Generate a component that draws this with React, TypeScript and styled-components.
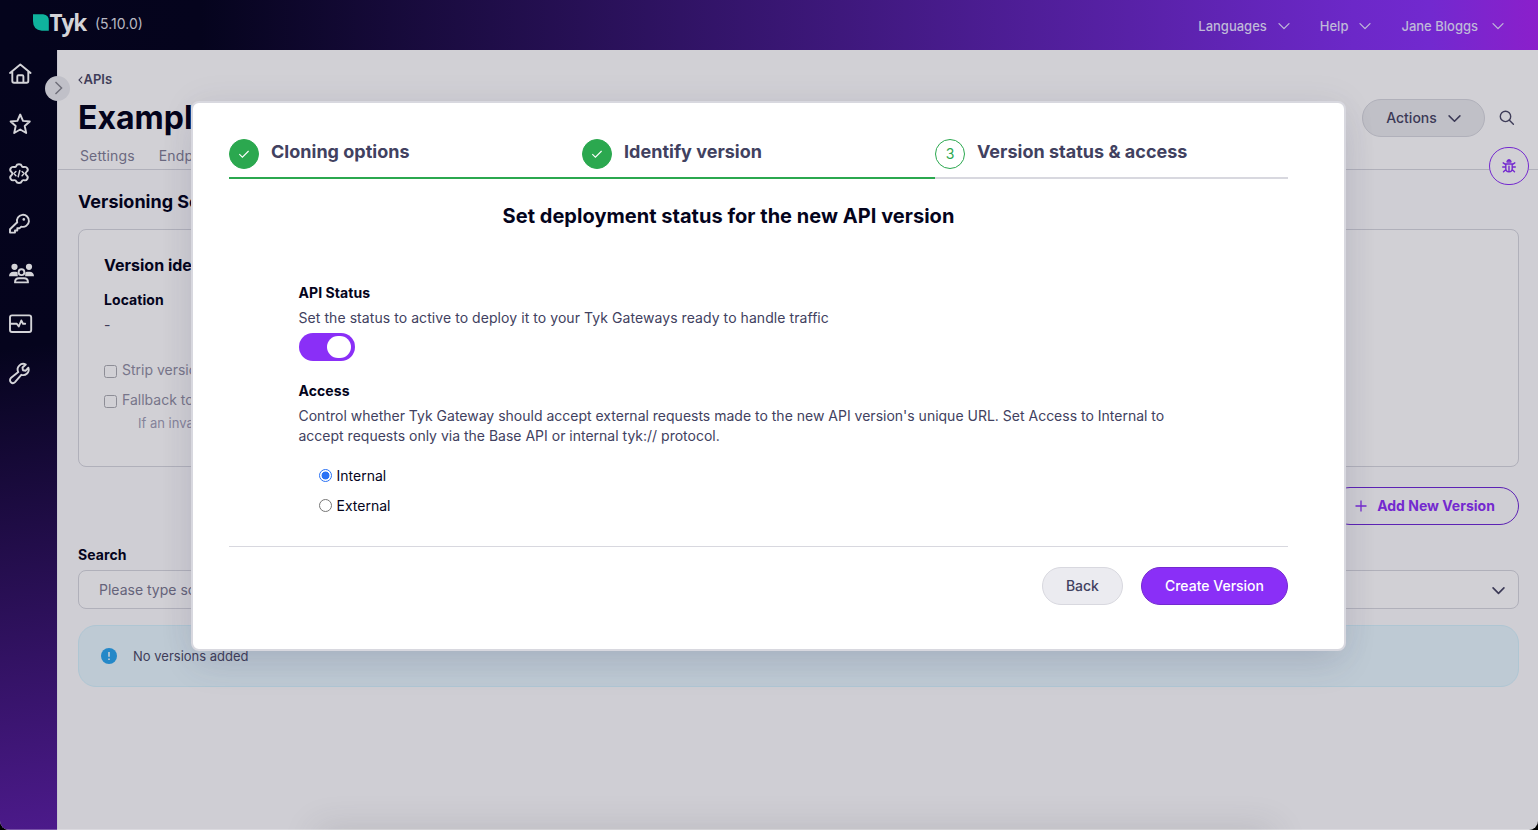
import React from 'react';
import styled, { createGlobalStyle } from 'styled-components';

const Global = createGlobalStyle`
  * { box-sizing: border-box; }
  html, body { margin: 0; padding: 0; }
  body { background: #000; overflow: hidden; }
  button { font-family: inherit; }
  h1, h2, h3, p { margin: 0; }
`;

const Window = styled.div`
  position: relative;
  width: 1538px;
  height: 830px;
  overflow: hidden;
  display: flex;
  flex-direction: column;
  border-radius: 0 0 9px 9px;
  background: #cfced4;
  font-family: Inter, 'Liberation Sans', sans-serif;
  font-size: 14px;
  color: #3f3d59;
`;

const Header = styled.header`
  height: 50px;
  flex: none;
  display: flex;
  align-items: center;
  padding: 0 34px 0 32px;
  color: #bfb9d8;
  background: linear-gradient(90deg, #04041c 0%, #05041d 13%, #6c28c8 88%, #7229cf 93%, #8b1fcb 100%);
`;

const Brand = styled.div`
  width: 54px;
  flex: none;
  display: flex;
  align-items: center;
  height: 50px;
`;

const WordMark = styled.span`
  font-family: 'Open Sans', Inter, sans-serif;
  font-size: 22.5px;
  font-weight: 700;
  line-height: 32px;
  letter-spacing: -1.1px;
  margin-top: -5px;
  color: #d4d4d8;
`;

const Version = styled.span`
  margin-left: 9px;
  flex: 1;
  font-size: 14px;
  line-height: 20px;
  margin-top: -2px;
  color: #b8b8c2;
`;

const HeaderItem = styled.div<{ $gap?: number }>`
  display: flex;
  align-items: center;
  gap: ${(p) => p.$gap ?? 11}px;
  margin-left: 30px;
  padding-top: 1px;
  font-size: 13px;
  font-weight: 500;
  line-height: 20px;
`;

const Body = styled.div`
  flex: 1;
  display: flex;
  min-height: 0;
`;

const Sidebar = styled.nav`
  width: 57px;
  flex: none;
  display: flex;
  flex-direction: column;
  gap: 22px;
  padding: 10px 0 0 6px;
  background: linear-gradient(172deg, #04041c 0%, #05041d 38%, #4c1a8b 100%);
  color: #d4d4d8;
`;

const NavIcon = styled.svg`
  width: 28px;
  height: 28px;
  fill: none;
  stroke: currentColor;
  stroke-width: 1.9;
  stroke-linecap: round;
  stroke-linejoin: round;
`;

const Expander = styled.div`
  position: absolute;
  left: 45px;
  top: 75.5px;
  width: 25px;
  height: 25px;
  padding-left: 2px;
  border-radius: 50%;
  background: #c0c0c8;
  display: flex;
  align-items: center;
  justify-content: center;
  color: #6d6d78;
`;

const Page = styled.main`
  flex: 1;
  min-width: 0;
  border-left: 1px solid #c7c6cf;
  white-space: nowrap;
`;

const Top = styled.div`
  height: 120px;
  background: #d1d0d5;
  border-bottom: 1px solid #b0b0ba;
  padding: 19px 23px 0 20px;
  display: flex;
  justify-content: space-between;
`;

const Crumb = styled.div`
  display: flex;
  align-items: center;
  gap: 0.5px;
  font-size: 13px;
  font-weight: 600;
  line-height: 20px;

  svg {
    flex: none;
    margin-top: 2px;
  }
`;

const PageTitle = styled.h1`
  margin-top: 8px;
  font-size: 32px;
  line-height: 42px;
  font-weight: 700;
  color: #04041c;
`;

const Tabs = styled.div`
  display: flex;
  gap: 24px;
  margin: 7px 0 0 2px;
  line-height: 20px;
  letter-spacing: 0.14px;
  color: #6b6980;
`;

const TopActions = styled.div`
  display: flex;
  gap: 14px;
  padding-top: 30px;
  height: 68px;
  align-items: center;
`;

const Button = styled.button<{ $kind: 'neutral' | 'dim' | 'primary' | 'outline' }>`
  display: flex;
  align-items: center;
  justify-content: center;
  flex: none;
  height: 38px;
  border-radius: 19px;
  padding: 0 23px 1px;
  font-size: 14px;
  font-weight: ${(p) => (p.$kind === 'outline' ? 700 : 500)};
  border: 1px solid
    ${(p) => ({ neutral: '#d8d8df', dim: '#b0b0ba', primary: '#7429cf', outline: '#5c22b4' })[p.$kind]};
  background: ${(p) =>
    ({ neutral: '#ebebf0', dim: '#c0c0c7', primary: '#8a2ff7', outline: 'transparent' })[p.$kind]};
  color: ${(p) =>
    ({ neutral: '#414160', dim: '#3b3956', primary: '#ffffff', outline: '#7429cf' })[p.$kind]};

  svg {
    flex: none;
  }
`;

const ActionsButton = styled(Button)`
  width: 123px;
  gap: 11px;

  svg {
    margin-top: 1px;
  }
`;

const AddButton = styled(Button)`
  width: 188px;
  gap: 10px;
  margin: 20px 0 0 auto;
`;

const DebugButton = styled.div`
  position: absolute;
  left: 1489px;
  top: 147px;
  width: 40px;
  height: 38px;
  border-radius: 20px;
  border: 1px solid #7429cf;
  background: #d1d0d5;
  display: flex;
  align-items: center;
  justify-content: center;
  color: #7429cf;
`;

const Content = styled.div`
  padding: 20px 19px 0 20px;
`;

const SectionTitle = styled.h2`
  font-size: 18px;
  line-height: 24px;
  font-weight: 700;
  color: #04041c;
`;

const Card = styled.section`
  margin-top: 15px;
  height: 238px;
  border: 1px solid #b0b0ba;
  border-radius: 8px;
  background: #d1d0d5;
  padding: 23px 25px;
`;

const CardTitle = styled.h3`
  font-size: 16px;
  line-height: 24px;
  font-weight: 700;
  color: #04041c;
`;

const Strong = styled.div`
  font-weight: 700;
  line-height: 20px;
  letter-spacing: 0.07px;
  color: #04041c;
`;

const Location = styled.div`
  margin-top: 13px;
  line-height: 29px;
`;

const Check = styled.div`
  display: flex;
  align-items: center;
  gap: 5px;
  height: 20px;
  margin-top: 10px;
  color: #77758a;
`;

const CheckBox = styled.span`
  width: 13px;
  height: 13px;
  margin-top: 4px;
  border: 1px solid #8d8d96;
  border-radius: 2.5px;
`;

const Checks = styled.div`
  margin-top: 20px;
`;

const Hint = styled.div`
  margin: 4px 0 0 34px;
  font-size: 13px;
  line-height: 20px;
  color: #85839a;
`;

const SearchLabel = styled(Strong)`
  margin-top: 20px;
`;

const SearchField = styled.div`
  margin-top: 5px;
  height: 39px;
  border: 1px solid #b0b0ba;
  border-radius: 8px;
  background: #d1d0d5;
  display: flex;
  align-items: center;
  justify-content: space-between;
  padding: 0 13px 0 20px;
  color: #65637a;

  svg {
    margin-top: 1px;
    color: #3b3956;
  }
`;

const Notice = styled.div`
  margin-top: 16px;
  height: 62px;
  border: 1px solid #afc6d3;
  border-radius: 18px;
  background: #becad4;
  display: flex;
  align-items: center;
  gap: 16px;
  padding-left: 22px;
  font-size: 13px;
  color: #3f3d59;
`;

const Modal = styled.div`
  position: absolute;
  left: 191px;
  top: 101px;
  width: 1155px;
  height: 550px;
  border: 2px solid #d8d8df;
  border-radius: 8px;
  background: #fff;
  box-shadow: 0 16px 36px -6px rgba(60, 60, 100, 0.15), 0 0 36px rgba(60, 60, 100, 0.06);
  padding: 36px 56px 0 36px;
`;

const Steps = styled.div`
  display: grid;
  grid-template-columns: repeat(3, 353px);
`;

const Step = styled.div<{ $done: boolean }>`
  display: flex;
  gap: 12px;
  height: 40px;
  border-bottom: 2px solid ${(p) => (p.$done ? '#2ba84f' : '#d8d8df')};
  font-size: 18px;
  font-weight: 700;
  line-height: 26px;
  letter-spacing: 0.015px;
  color: #414160;
`;

const Badge = styled.span<{ $done: boolean }>`
  width: 30px;
  height: 30px;
  border-radius: 50%;
  border: 1px solid #2ba84f;
  background: ${(p) => (p.$done ? '#2ba84f' : '#fff')};
  color: ${(p) => (p.$done ? '#fff' : '#2ba84f')};
  display: flex;
  align-items: center;
  justify-content: center;
  font-size: 14px;
  font-weight: 400;
`;

const ModalTitle = styled.h2`
  margin-top: 22px;
  text-align: center;
  font-size: 20px;
  line-height: 30px;
  font-weight: 700;
  letter-spacing: 0.03px;
  color: #04041c;
  padding-right: 60px;
`;

const Form = styled.div`
  padding: 52px 70px 0 69.5px;
`;

const Desc = styled.p<{ $spacing?: number }>`
  margin-top: 5px;
  line-height: 20px;
  letter-spacing: ${(p) => p.$spacing ?? 0}px;
  color: #414160;
`;

const Toggle = styled.div`
  margin-top: 5px;
  width: 56px;
  height: 28px;
  border-radius: 14px;
  background: #8a2ff7;
  display: flex;
  justify-content: flex-end;
  padding: 3px 4px;
`;

const Knob = styled.span`
  width: 24px;
  height: 22px;
  border-radius: 12px;
  background: #fff;
`;

const Access = styled.div`
  margin-top: 20px;
`;

const Radios = styled.div`
  margin: 20px 0 0 20px;
  display: flex;
  flex-direction: column;
  gap: 10px;
`;

const RadioRow = styled.label`
  display: flex;
  align-items: center;
  gap: 5px;
  height: 20px;
  padding-bottom: 1px;
  color: #04041c;
`;

const RadioDot = styled.span<{ $on: boolean }>`
  width: 13px;
  height: 13px;
  border-radius: 50%;
  border: 1px solid ${(p) => (p.$on ? '#2a72f5' : '#767676')};
  background: ${(p) => (p.$on ? 'radial-gradient(circle, #2a72f5 3.6px, #fff 4.3px)' : '#fff')};
`;

const Footer = styled.div`
  margin-top: 30px;
  border-top: 1px solid #d8d8df;
  padding-top: 20px;
  width: 1059px;
  display: flex;
  justify-content: flex-end;
  gap: 18px;
`;

const BottomShade = styled.div`
  position: absolute;
  left: 320px;
  top: 832px;
  width: 950px;
  height: 20px;
  box-shadow: 0 0 34px 4px rgba(60, 60, 70, 0.15);
`;

const BottomEdge = styled.div`
  position: absolute;
  left: 0;
  top: 829px;
  width: 1538px;
  height: 1px;
  background: rgba(255, 255, 255, 0.25);
`;

const Chevron = ({ w = 12, sw = 1.3 }: { w?: number; sw?: number }) => (
  <svg width={w} height={w} viewBox="0 0 12 12" fill="none" stroke="currentColor" strokeWidth={sw} strokeLinecap="round" strokeLinejoin="round">
    <path d="M1 3.6 6 8.6 11 3.6" />
  </svg>
);

const Logo = () => (
  <Brand>
    <svg width="18" height="50" viewBox="0 0 18 50">
      <path d="M1 14H11.5Q17.3 14.8 17.3 20.5V31H10Q1 30 1 21Z" fill="#0fb39d" />
    </svg>
    <WordMark>Tyk</WordMark>
  </Brand>
);

const Tick = () => (
  <svg width="12" height="12" viewBox="0 0 12 12" fill="none" stroke="currentColor" strokeWidth="1.1">
    <path d="M1.3 6.2 4.4 9.2 10.6 3" />
  </svg>
);

const HomeIcon = () => (
  <NavIcon viewBox="0 0 28 28">
    <path d="M4 13 14.3 4.5 24.6 13M6.3 11.5V21Q6.3 22.7 8 22.7H20.6Q22.3 22.7 22.3 21V11.5M11.3 22.5V16.5Q11.3 15.3 12.5 15.3H16.2Q17.4 15.3 17.4 16.5V22.5" />
  </NavIcon>
);

const StarIcon = () => (
  <NavIcon viewBox="0 0 28 28">
    <path d="M14.2 4.5 17 10.9 23.8 11.5 18.7 16 20.2 23 14.2 19.5 8.2 23 9.7 16 4.6 11.5 11.4 10.9Z" />
  </NavIcon>
);

const GearIcon = () => (
  <NavIcon viewBox="0 0.5 28 28">
    <path d="M10.4 6.3Q10.9 4.7 13 4.7T15.6 6.3Q16.2 7.9 17.8 7.5 19.8 6.9 20.9 8.8 22 10.7 20.6 11.9 19.3 13 19.3 14.1T20.6 16.3Q22 17.5 20.9 19.4 19.8 21.3 17.8 20.7 16.2 20.3 15.6 21.9 15.1 23.5 13 23.5T10.4 21.9Q9.8 20.3 8.2 20.7 6.2 21.3 5.1 19.4 4 17.5 5.4 16.3 6.7 15.2 6.7 14.1T5.4 11.9Q4 10.7 5.1 8.8 6.2 6.9 8.2 7.5 9.8 7.9 10.4 6.3Z" transform="matrix(1.05 0 0 1 -0.65 0)" />
    <path d="M9.9 12 7.9 14.1 9.9 16.2M16.1 12 18.1 14.1 16.1 16.2M13.8 11 12.2 17.2" strokeWidth="1.5" />
  </NavIcon>
);

const KeyIcon = () => (
  <NavIcon viewBox="0 0.5 28 28">
    <path d="M11.2 13.1A6 6 0 1 1 15.3 17.1L13.7 18.7H11.3V21H9V23.1H4V19.7L11.2 12.7" />
    <circle cx="17.8" cy="9.9" r="1.3" fill="currentColor" stroke="none" />
  </NavIcon>
);

const UsersIcon = () => (
  <NavIcon viewBox="0 0 28 28">
    <g fill="currentColor" stroke="none">
      <circle cx="8.5" cy="6.8" r="3.1" />
      <circle cx="23" cy="6.8" r="3.1" />
      <path d="M3 16.2Q3.2 11.7 7.5 11.7H9.8Q10.9 11.7 11.6 12.4L11.8 16.2Z" />
      <path d="M28 16.2Q27.8 11.7 23.5 11.7H21Q20 11.7 19.3 12.4L19.1 16.2Z" />
    </g>
    <circle cx="15.5" cy="12.2" r="2.9" />
    <path d="M9 22.4Q9 18.3 13 18.3H18Q22 18.3 22 22.4Z" />
  </NavIcon>
);

const MonitorIcon = () => (
  <NavIcon viewBox="0 0.5 28 28">
    <rect x="4" y="5.9" width="21.2" height="16.6" rx="2" />
    <path d="M4.5 14.2H10.8L12.8 17 15.3 11 17 14.2H19.2" />
  </NavIcon>
);

const WrenchIcon = () => (
  <NavIcon viewBox="0 0.5 28 28">
    <path d="M19.8 5A5.6 5.6 0 0 0 12.3 12.6L4.8 18.6A2.9 2.9 0 0 0 9 22.6L15.3 15.3A5.6 5.6 0 0 0 22.4 8.2L19.7 11.2 16.9 10.7 16.5 8Z" />
  </NavIcon>
);

const SearchIcon = () => (
  <svg width="16" height="16" viewBox="0 0 16 16" fill="none" stroke="currentColor" strokeWidth="1.4" strokeLinecap="round">
    <circle cx="6.5" cy="6.4" r="5.2" />
    <path d="m10.4 10.3 4 4" />
  </svg>
);

const BugIcon = () => (
  <svg width="14" height="14" viewBox="0 0 14 14" fill="none" stroke="currentColor" strokeWidth="1.4" strokeLinecap="round">
    <path d="M4.8 2.8A2.2 2.2 0 0 1 9.2 2.8Z" fill="currentColor" strokeWidth="1" />
    <path d="M3.8 5H10.2V9.5Q10.2 12.8 7 12.8 3.8 12.8 3.8 9.5ZM7 7.3V12.5M3.8 5.6 1.2 3.8M10.2 5.6 12.8 3.8M3.5 8H.7M10.5 8H13.3M4 10.5 1.5 12.7M10 10.5 12.5 12.7" />
  </svg>
);

const steps = ['Cloning options', 'Identify version', 'Version status & access'];

export default function App() {
  return (
    <>
      <Global />
      <Window>
        <Header>
          <Logo />
          <Version>(5.10.0)</Version>
          <HeaderItem>Languages <Chevron /></HeaderItem>
          <HeaderItem>Help <Chevron /></HeaderItem>
          <HeaderItem $gap={14}>Jane Bloggs <Chevron /></HeaderItem>
        </Header>
        <Body>
          <Sidebar>
            <HomeIcon />
            <StarIcon />
            <GearIcon />
            <KeyIcon />
            <UsersIcon />
            <MonitorIcon />
            <WrenchIcon />
          </Sidebar>
          <Page>
            <Top>
              <div>
                <Crumb>
                  <svg width="5" height="8" viewBox="0 0 5 8" fill="none" stroke="currentColor" strokeWidth="1.1"><path d="M4.2.6 1 4 4.2 7.4" /></svg>
                  APIs
                </Crumb>
                <PageTitle>Example</PageTitle>
                <Tabs><span>Settings</span><span>Endpoints</span></Tabs>
              </div>
              <TopActions>
                <ActionsButton $kind="dim">Actions <Chevron w={13} sw={1.4} /></ActionsButton>
                <SearchIcon />
              </TopActions>
            </Top>
            <Content>
              <SectionTitle>Versioning Settings</SectionTitle>
              <Card>
                <CardTitle>Version identifier</CardTitle>
                <Location>
                  <Strong>Location</Strong>
                  <div>-</div>
                </Location>
                <Checks>
                  <Check><CheckBox />Strip version</Check>
                  <Check><CheckBox />Fallback to default</Check>
                  <Hint>If an invalid</Hint>
                </Checks>
              </Card>
              <AddButton $kind="outline">
                <svg width="12" height="12" viewBox="0 0 12 12" stroke="currentColor" strokeWidth="1.3"><path d="M6 .5V11.5M.5 6H11.5" /></svg>
                Add New Version
              </AddButton>
              <SearchLabel>Search</SearchLabel>
              <SearchField>Please type some <Chevron w={13} sw={1.5} /></SearchField>
              <Notice>
                <svg width="16" height="16" viewBox="0 0 16 16"><circle cx="8" cy="8" r="8" fill="#2488c8" /><path d="M8 4V8.8M8 10.4V12" stroke="#becad4" strokeWidth="1.7" /></svg>
                No versions added
              </Notice>
            </Content>
          </Page>
        </Body>
        <Expander>
          <svg width="9" height="14" viewBox="0 0 9 14" fill="none" stroke="currentColor" strokeWidth="1.4"><path d="M1.5 1 7.6 7 1.5 13" /></svg>
        </Expander>
        <DebugButton><BugIcon /></DebugButton>
        <BottomShade />
        <BottomEdge />
        <Modal>
          <Steps>
            {steps.map((s, i) => (
              <Step key={s} $done={i < 2}>
                <Badge $done={i < 2}>{i < 2 ? <Tick /> : i + 1}</Badge>
                {s}
              </Step>
            ))}
          </Steps>
          <ModalTitle>Set deployment status for the new API version</ModalTitle>
          <Form>
            <Strong>API Status</Strong>
            <Desc $spacing={0.065}>Set the status to active to deploy it to your Tyk Gateways ready to handle traffic</Desc>
            <Toggle><Knob /></Toggle>
            <Access>
              <Strong>Access</Strong>
              <Desc>
                Control whether Tyk Gateway should accept external requests made to the new API version's unique URL. Set Access to Internal to<br />accept requests only via the Base API or internal tyk:// protocol.
              </Desc>
            </Access>
            <Radios>
              <RadioRow><RadioDot $on />Internal</RadioRow>
              <RadioRow><RadioDot $on={false} />External</RadioRow>
            </Radios>
          </Form>
          <Footer>
            <Button $kind="neutral">Back</Button>
            <Button $kind="primary">Create Version</Button>
          </Footer>
        </Modal>
      </Window>
    </>
  );
}
